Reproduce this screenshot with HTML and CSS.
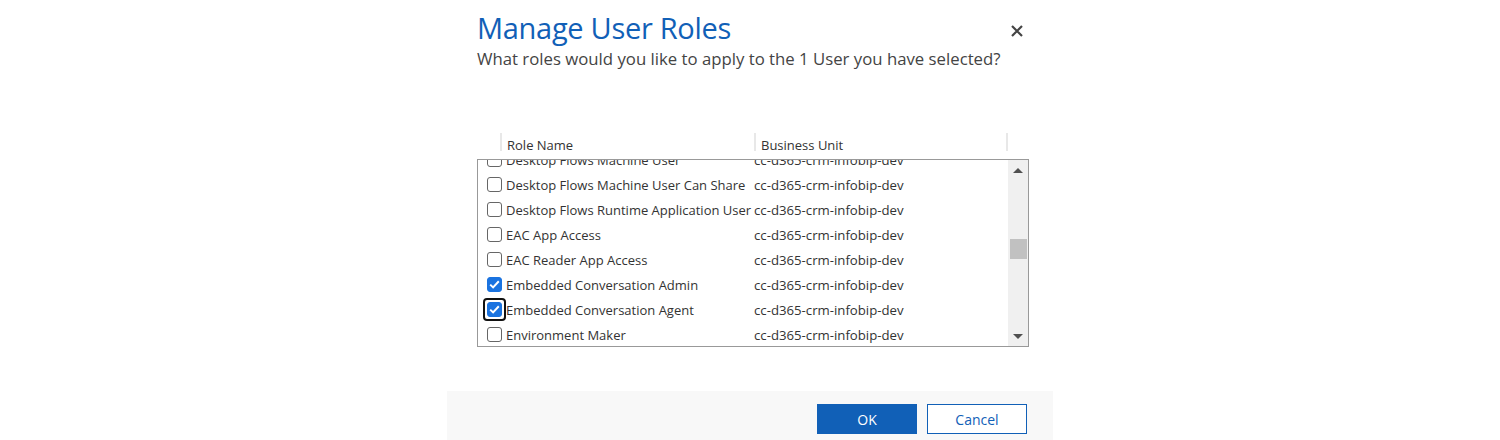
FILE: index.html
```html
<!DOCTYPE html>
<html>
<head>
<meta charset="utf-8">
<link rel="stylesheet" href="styles.css">
</head>
<body>
<div class="dialog">
  <div class="head">
    <div class="titles">
      <h1 class="title">Manage User Roles</h1>
      <p class="subtitle">What roles would you like to apply to the 1 User you have selected?</p>
    </div>
    <button class="close" aria-label="Close">
      <svg width="12" height="12" viewBox="0 0 12 12"><path d="M1 1 L11 11 M11 1 L1 11" stroke="#444" stroke-width="2.2" fill="none"/></svg>
    </button>
  </div>
  <div class="grid">
    <div class="grid-head">
      <div class="hcell c1">Role Name</div>
      <div class="hcell c2">Business Unit</div>
      <div class="hend"></div>
    </div>
    <div class="listbox">
      <div class="viewport">
        <div class="rows">
          <div class="row"><span class="cb"></span><span class="name">Desktop Flows Machine User</span><span class="bu">cc-d365-crm-infobip-dev</span></div>
          <div class="row"><span class="cb"></span><span class="name">Desktop Flows Machine User Can Share</span><span class="bu">cc-d365-crm-infobip-dev</span></div>
          <div class="row"><span class="cb"></span><span class="name">Desktop Flows Runtime Application User</span><span class="bu">cc-d365-crm-infobip-dev</span></div>
          <div class="row"><span class="cb"></span><span class="name">EAC App Access</span><span class="bu">cc-d365-crm-infobip-dev</span></div>
          <div class="row"><span class="cb"></span><span class="name">EAC Reader App Access</span><span class="bu">cc-d365-crm-infobip-dev</span></div>
          <div class="row"><span class="cb checked"><svg width="11" height="9" viewBox="0 0 11 9"><path d="M1.2 4.6 L4.1 7.4 L9.8 1.3" stroke="#fff" stroke-width="2" fill="none"/></svg></span><span class="name">Embedded Conversation Admin</span><span class="bu">cc-d365-crm-infobip-dev</span></div>
          <div class="row"><span class="cb checked focus"><svg width="11" height="9" viewBox="0 0 11 9"><path d="M1.2 4.6 L4.1 7.4 L9.8 1.3" stroke="#fff" stroke-width="2" fill="none"/></svg></span><span class="name">Embedded Conversation Agent</span><span class="bu">cc-d365-crm-infobip-dev</span></div>
          <div class="row"><span class="cb"></span><span class="name">Environment Maker</span><span class="bu">cc-d365-crm-infobip-dev</span></div>
        </div>
      </div>
      <div class="scrollbar">
        <div class="arrow up"></div>
        <div class="track"><div class="thumb"></div></div>
        <div class="arrow down"></div>
      </div>
    </div>
  </div>
  <div class="footer">
    <button class="btn primary">OK</button>
    <button class="btn secondary">Cancel</button>
  </div>
</div>
</body>
</html>
```
FILE: styles.css
```css
html, body {
  margin: 0;
  padding: 0;
  background: #fff;
}
body {
  font-family: "Open Sans", "Noto Sans", "Liberation Sans", sans-serif;
  color: #333;
}
.dialog {
  width: 606px;
  height: 440px;
  margin: 0 auto;
  display: flex;
  flex-direction: column;
  background: #fff;
}
.head {
  display: flex;
  justify-content: space-between;
  padding: 10px 26px 0 30px;
}
.title {
  margin: 0;
  font-weight: 400;
  font-size: 29px;
  line-height: 36px;
  color: #1160b7;
  letter-spacing: -0.3px;
}
.subtitle {
  margin: 0;
  font-size: 16.75px;
  line-height: 26px;
  color: #444;
}
.close {
  border: 0;
  background: none;
  padding: 0;
  margin-top: 11px;
  width: 20px;
  height: 20px;
  display: flex;
  align-items: center;
  justify-content: center;
}
.grid {
  margin: 61px 0 0 30px;
  width: 552px;
}
.grid-head {
  display: flex;
  height: 18px;
  align-items: stretch;
  margin-bottom: 8px;
}
.hcell {
  border-left: 2px solid #e8e8e8;
  font-size: 13px;
  line-height: 18px;
  padding-left: 5px;
  color: #333;
  padding-top: 3px;
}
.c1 { margin-left: 23px; width: 247px; }
.c2 { width: 245px; }
.hend { border-left: 2px solid #e8e8e8; }
.listbox {
  border: 1px solid #999;
  height: 186px;
  display: flex;
}
.viewport {
  flex: 1;
  overflow: hidden;
}
.rows {
  margin-top: -13px;
}
.row {
  height: 25px;
  display: flex;
  align-items: center;
  font-size: 13px;
  color: #333;
  white-space: nowrap;
}
.cb {
  box-sizing: border-box;
  width: 15px;
  height: 15px;
  border: 1px solid #666;
  border-radius: 3px;
  margin-left: 9px;
  margin-right: 4px;
  flex: none;
  display: flex;
  align-items: center;
  justify-content: center;
  position: relative;
}
.cb.checked {
  background: #1a73e0;
  border-color: #1a73e0;
}
.cb.focus::after {
  content: "";
  position: absolute;
  left: -5px;
  top: -5px;
  right: -5px;
  bottom: -5px;
  border: 2px solid #111;
  border-radius: 4px;
}
.name {
  width: 248px;
  overflow: hidden;
}
.bu {
  font-size: 13.2px;
}
.scrollbar {
  width: 20px;
  background: #f0f0f0;
  display: flex;
  flex-direction: column;
  align-items: center;
}
.arrow {
  height: 20px;
  width: 20px;
  display: flex;
  align-items: center;
  justify-content: center;
}
.arrow.up::before {
  content: "";
  border-left: 5px solid transparent;
  border-right: 5px solid transparent;
  border-bottom: 5px solid #505050;
}
.arrow.down::before {
  content: "";
  border-left: 5px solid transparent;
  border-right: 5px solid transparent;
  border-top: 5px solid #505050;
}
.track {
  flex: 1;
  width: 100%;
  display: flex;
  justify-content: center;
}
.thumb {
  width: 17px;
  height: 20px;
  margin-top: 59px;
  background: #c1c1c1;
}
.footer {
  margin-top: auto;
  height: 49px;
  background: #f8f8f8;
  display: flex;
  justify-content: flex-end;
  align-items: flex-start;
  gap: 10px;
  padding: 13px 26px 0 0;
  box-sizing: border-box;
}
.btn {
  width: 100px;
  height: 30px;
  font-family: "Open Sans", "Noto Sans", sans-serif;
  font-size: 14px;
  border-radius: 0;
  cursor: pointer;
}
.primary {
  background: #1160b7;
  color: #fff;
  border: 1px solid #1160b7;
}
.secondary {
  background: #fff;
  color: #1160b7;
  border: 1px solid #1160b7;
}
```
